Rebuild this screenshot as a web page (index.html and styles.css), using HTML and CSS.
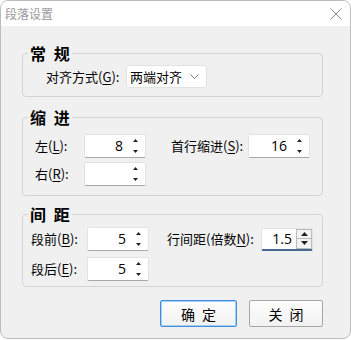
FILE: index.html
```html
<!DOCTYPE html>
<html lang="zh">
<head>
<meta charset="utf-8">
<link rel="stylesheet" href="styles.css">
</head>
<body>
<div class="window">
  <div class="titlebar">
    <span class="title">段落设置</span>
    <svg class="close" width="12" height="12" viewBox="0 0 12 12"><path d="M0.5 0.5 L11.5 11.5 M11.5 0.5 L0.5 11.5" stroke="#8a8a8a" stroke-width="1" fill="none"/></svg>
  </div>
  <div class="body">
    <fieldset class="group g1">
      <legend>常 规</legend>
      <div class="row">
        <label class="lbl lbl-align">对齐方式(<u>G</u>):</label>
        <div class="select"><span>两端对齐</span>
          <svg class="chev" width="9" height="5" viewBox="0 0 9 5"><path d="M0.5 0.5 L4.5 4.5 L8.5 0.5" stroke="#7a7a7a" fill="none"/></svg>
        </div>
      </div>
    </fieldset>

    <fieldset class="group g2">
      <legend>缩 进</legend>
      <div class="row">
        <label class="lbl w49">左(<u>L</u>):</label>
        <div class="spin w62"><span class="val">8</span><span class="arr"><svg width="5" height="14" viewBox="0 0 5 14"><path d="M0 3 L2.5 0 L5 3Z M0 11 L5 11 L2.5 14Z" fill="#222"/></svg></span></div>
        <label class="lbl lbl-first">首行缩进(<u>S</u>):</label>
        <div class="spin w62"><span class="val">16</span><span class="arr"><svg width="5" height="14" viewBox="0 0 5 14"><path d="M0 3 L2.5 0 L5 3Z M0 11 L5 11 L2.5 14Z" fill="#222"/></svg></span></div>
      </div>
      <div class="row">
        <label class="lbl w49">右(<u>R</u>):</label>
        <div class="spin w62"><span class="val"></span><span class="arr"><svg width="5" height="14" viewBox="0 0 5 14"><path d="M0 3 L2.5 0 L5 3Z M0 11 L5 11 L2.5 14Z" fill="#222"/></svg></span></div>
      </div>
    </fieldset>

    <fieldset class="group g3">
      <legend>间 距</legend>
      <div class="row">
        <label class="lbl w56">段前(<u>B</u>):</label>
        <div class="spin w62"><span class="val">5</span><span class="arr"><svg width="5" height="14" viewBox="0 0 5 14"><path d="M0 3 L2.5 0 L5 3Z M0 11 L5 11 L2.5 14Z" fill="#222"/></svg></span></div>
        <label class="lbl lbl-line">行间距(倍数<u>N</u>):</label>
        <div class="spin spin-focus w52"><span class="val">1.5</span>
          <span class="btns">
            <span class="sb"><svg width="7" height="4" viewBox="0 0 7 4"><path d="M0 4 L3.5 0 L7 4Z" fill="#222"/></svg></span>
            <span class="sb"><svg width="7" height="4" viewBox="0 0 7 4"><path d="M0 0 L7 0 L3.5 4Z" fill="#222"/></svg></span>
          </span>
        </div>
      </div>
      <div class="row">
        <label class="lbl w56">段后(<u>E</u>):</label>
        <div class="spin w62"><span class="val">5</span><span class="arr"><svg width="5" height="14" viewBox="0 0 5 14"><path d="M0 3 L2.5 0 L5 3Z M0 11 L5 11 L2.5 14Z" fill="#222"/></svg></span></div>
      </div>
    </fieldset>

    <div class="buttons">
      <button class="btn btn-default">确 定</button>
      <button class="btn btn-close">关 闭</button>
    </div>
  </div>
</div>
</body>
</html>
```

FILE: styles.css
```css
* { box-sizing: border-box; }
html, body { margin: 0; padding: 0; background: #ffffff; }
body {
  font-family: "Noto Sans CJK SC", "Noto Sans", sans-serif;
  font-size: 13px;
  color: #000;
}
.window {
  width: 351px;
  height: 339px;
  border: 1px solid #bdbdbd;
  border-radius: 8px;
  background: #f0f0f0;
  overflow: hidden;
}
.titlebar {
  height: 25px;
  background: #fff;
  display: flex;
  align-items: center;
  justify-content: space-between;
  padding: 0 8px 0 4px;
}
.title {
  font-size: 12px;
  color: #9a9a9a;
  line-height: 14px;
}
.close { margin-top: 1px; }
.body {
  padding: 18px 26px 0 21px;
}
.group {
  margin: 0;
  border: 1px solid #d4d4d4;
  border-radius: 4px;
  min-inline-size: 0;
  width: 301px;
  padding-left: 5px;
  padding-right: 8px;
}
.group legend {
  font-size: 16px;
  font-weight: bold;
  line-height: 18px;
  padding: 0 2px;
  color: #000;
  word-spacing: 4px;
}
.g1 { padding-top: 3px; padding-bottom: 8px; }
.g1 .row { padding-left: 18px; }
.g2 { padding-top: 8px; padding-bottom: 9px; margin-top: 11px; }
.g2 .row { padding-left: 7px; }
.g3 { padding-top: 4px; padding-bottom: 5px; margin-top: 9px; }
.g3 .row { padding-left: 3px; }
.row {
  display: flex;
  align-items: center;
}
.g2 .row + .row { margin-top: 4px; }
.g3 .row + .row { margin-top: 6px; }
.lbl { line-height: 16px; white-space: nowrap; }
.lbl u { text-underline-offset: 2px; }
.lbl-align { width: 80px; }
.w49 { width: 49px; }
.w56 { width: 56px; }
.lbl-first { width: 77px; margin-left: 25px; }
.lbl-line { width: 94px; margin-left: 18px; }

.select {
  width: 81px;
  height: 23px;
  background: #fff;
  border: 1px solid #e2e2e2;
  border-radius: 3px;
  display: flex;
  align-items: center;
  justify-content: space-between;
  padding: 0 7px 0 3px;
  font-size: 13px;
}
.spin {
  height: 24px;
  background: #fff;
  border: 1px solid #e3e3e3;
  border-bottom-color: #a8a8a8;
  border-radius: 2px;
  display: flex;
  align-items: center;
  justify-content: flex-end;
  font-family: "Open Sans", "Noto Sans", sans-serif;
  font-size: 14px;
}
.w62 { width: 62px; }
.w52 { width: 52px; height: 23px; }
.val { padding-right: 10px; line-height: 16px; }
.arr { display: flex; margin-right: 7px; }
.arr svg { display: block; }
.spin-focus {
  border-bottom: 2px solid #456a90;
}
.spin-focus .val { padding-right: 4px; }
.btns {
  display: flex;
  flex-direction: column;
  width: 16px;
  height: 20px;
}
.sb {
  flex: 1;
  display: flex;
  align-items: center;
  justify-content: center;
  background: #f3f3f3;
  border: 1px solid #bcbcbc;
}
.sb + .sb { border-top: none; }
.sb svg { display: block; }

.buttons {
  display: flex;
  justify-content: flex-end;
  gap: 12px;
  margin-top: 13px;
  width: 301px;
}
.btn {
  height: 27px;
  font-family: "Noto Sans CJK SC", sans-serif;
  font-size: 14px;
  color: #000;
  background: linear-gradient(#fdfdfd, #f2f2f2);
  border: 1px solid #a6a6a6;
  border-radius: 2px;
  padding: 0;
  line-height: 16px;
  word-spacing: 4px;
}
.btn-default {
  width: 77px;
  border-color: #3d8ee0;
  box-shadow: inset 0 0 0 1px #a8d0f5;
}
.btn-close { width: 74px; }
```
